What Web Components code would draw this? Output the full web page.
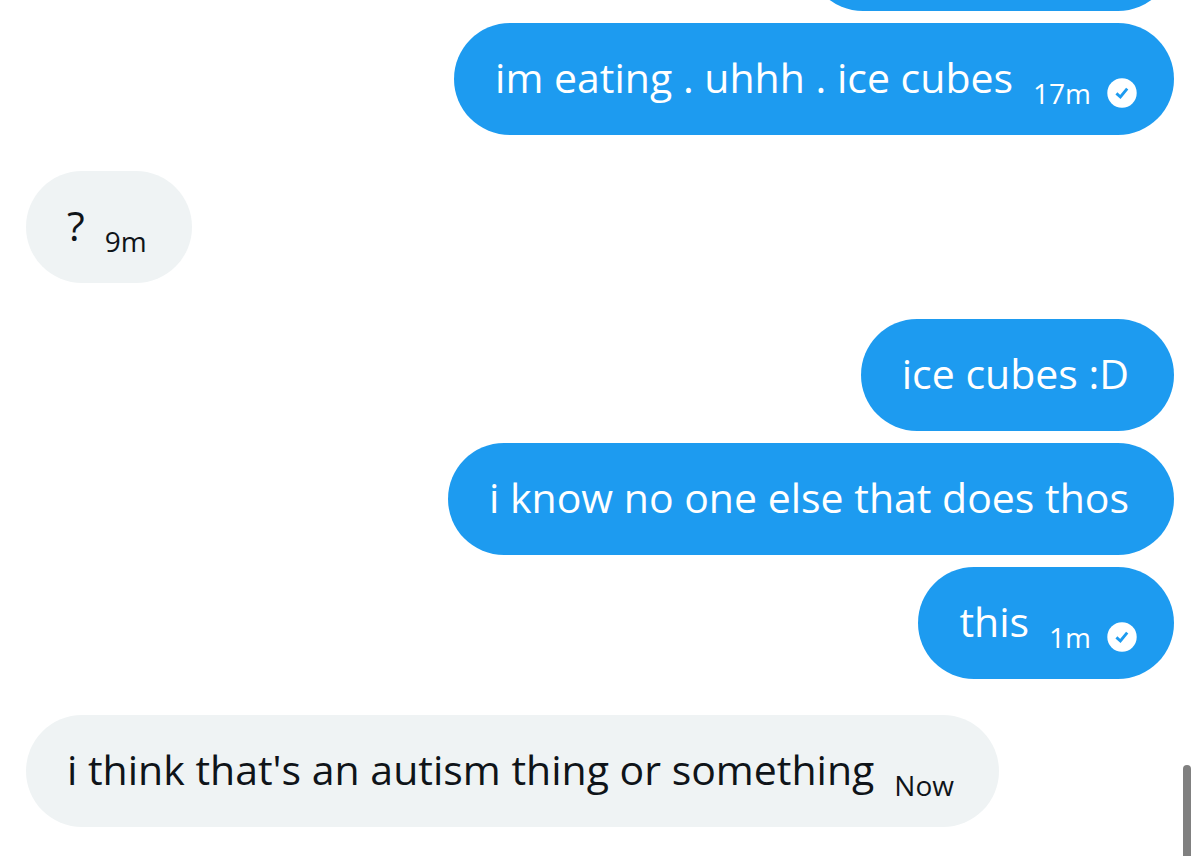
<!DOCTYPE html>
<html lang="en">
<head>
<meta charset="utf-8">
<meta name="viewport" content="width=device-width, initial-scale=1">
<title>Messages</title>
<style>
  body { margin: 0; background: #fff; font-family: "Open Sans", "Noto Sans", sans-serif; }
</style>
</head>
<body>
<chat-thread>
  <chat-group side="out">
    <chat-bubble class="earlier" side="out"></chat-bubble>
    <chat-bubble side="out" time="17m" sent>im eating . uhhh . ice cubes</chat-bubble>
  </chat-group>
  <chat-group>
    <chat-bubble time="9m">?</chat-bubble>
  </chat-group>
  <chat-group side="out">
    <chat-bubble side="out">ice cubes :D</chat-bubble>
    <chat-bubble side="out">i know no one else that does thos</chat-bubble>
    <chat-bubble side="out" time="1m" sent>this</chat-bubble>
  </chat-group>
  <chat-group>
    <chat-bubble time="Now">i think that's an autism thing or something</chat-bubble>
  </chat-group>
</chat-thread>

<script>
  class ChatThread extends HTMLElement {
    constructor() {
      super();
      this.attachShadow({ mode: 'open' }).innerHTML = `
        <style>
          :host { display: block; position: relative; height: 100vh; overflow: hidden; }
          main { box-sizing: border-box; height: 100%; display: flex; flex-direction: column;
                 justify-content: flex-end; gap: 36px; padding: 0 26px 29px; }
          .thumb { position: absolute; right: 9px; bottom: -8px; width: 8px; height: 99px;
                   border-radius: 4px; background: #808080; }
        </style>
        <main><slot></slot></main>
        <div class="thumb"></div>`;
    }
  }

  class ChatGroup extends HTMLElement {
    constructor() {
      super();
      this.attachShadow({ mode: 'open' }).innerHTML = `
        <style>
          :host { display: flex; flex-direction: column; align-items: flex-start; gap: 12px; flex: none; }
          :host([side="out"]) { align-items: flex-end; }
        </style>
        <slot></slot>`;
    }
  }

  class SentMark extends HTMLElement {
    constructor() {
      super();
      this.attachShadow({ mode: 'open' }).innerHTML = `
        <style>
          :host { display: block; width: 30px; height: 30px; }
          svg { display: block; width: 100%; height: 100%; }
        </style>
        <svg viewBox="0 0 30 30" role="img" aria-label="Sent">
          <circle cx="15" cy="15" r="14.7" fill="#fff"/>
          <path d="M9.4 15.4 L13.4 19 L20.2 10.7" fill="none" stroke="#1d9bf0" stroke-width="2.9"/>
        </svg>`;
    }
  }

  class ChatBubble extends HTMLElement {
    connectedCallback() {
      if (this.shadowRoot) return;
      const time = this.getAttribute('time');
      this.attachShadow({ mode: 'open' }).innerHTML = `
        <style>
          :host { display: flex; align-items: center; box-sizing: border-box; min-height: 112px;
                  padding: 0 45px 4px 41px; border-radius: 56px; background: #eff3f4; color: #0f1419; }
          :host([side="out"]) { background: #1d9bf0; color: #fff; }
          :host([sent]) { padding-right: 37px; }
          :host(.earlier) { width: 32%; }
          p { margin: 0; font-size: 41px; line-height: 56px; }
          .meta { display: flex; align-items: center; gap: 16px; margin: 32px 0 0 20px; }
          time { font-size: 28px; line-height: 36px; }
        </style>
        <p><slot></slot></p>
        ${time ? `<div class="meta"><time>${time}</time>${this.hasAttribute('sent') ? '<sent-mark></sent-mark>' : ''}</div>` : ''}`;
    }
  }

  customElements.define('chat-thread', ChatThread);
  customElements.define('chat-group', ChatGroup);
  customElements.define('sent-mark', SentMark);
  customElements.define('chat-bubble', ChatBubble);
</script>
</body>
</html>
